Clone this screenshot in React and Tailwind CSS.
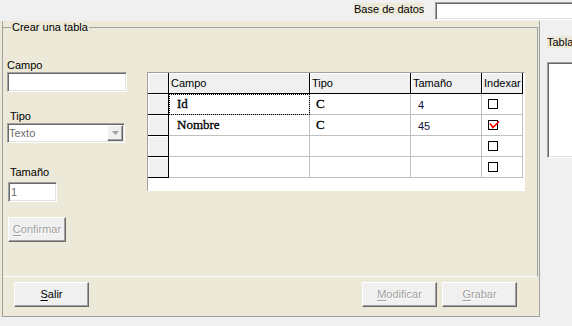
import React from "react";

// classic win32 edges
const sunken =
  "border border-t-[#a0a0a0] border-l-[#a0a0a0] border-b-white border-r-white shadow-[inset_1px_1px_0_#696969,inset_-1px_-1px_0_#e3e3e3]";
const raised =
  "border border-t-white border-l-white border-b-[#696969] border-r-[#696969] shadow-[inset_-1px_-1px_0_#a0a0a0]";

const columns = [
  { name: "Campo", cls: "w-[141px]" },
  { name: "Tipo", cls: "w-[101px]" },
  { name: "Tamaño", cls: "w-[71px]" },
  { name: "Indexar", cls: "w-[41px]" },
];

const rows = [
  { campo: "Id", tipo: "C", tam: "4", idx: false, focus: true },
  { campo: "Nombre", tipo: "C", tam: "45", idx: true },
  { campo: "", tipo: "", tam: "", idx: false },
  { campo: "", tipo: "", tam: "", idx: false },
];

const serif = "font-['Liberation_Serif','Times_New_Roman',serif] text-[13px] text-black [-webkit-text-stroke:0.3px_#000]";

const Button = ({ label, rest, disabled, className = "" }) => (
  <button
    disabled={disabled}
    className={`h-[25px] bg-[#f0f0f0] ${raised} leading-[13px] ${
      disabled ? "text-[#a0a0a0] [text-shadow:1px_1px_0_#ffffff]" : "text-black"
    } ${className}`}
  >
    <span className="underline underline-offset-2">{label}</span>
    {rest}
  </button>
);

const CheckBox = ({ checked }) => (
  <div className="w-[10px] h-[10px] border border-black bg-white relative overflow-visible">
    {checked && (
      <svg width="12" height="11" viewBox="0 0 12 11" className="absolute left-[0px] top-[-1px]">
        <path d="M1 3.5 L4 7.5 L10 1.5" fill="none" stroke="#ff0000" strokeWidth="1.6" />
      </svg>
    )}
  </div>
);

const Grid = () => (
  <div className="mt-[38px] ml-[20px] w-[378px] h-[119px] shrink-0 border border-t-[#a0a0a0] border-l-[#a0a0a0] border-b-white border-r-white bg-white">
    <div className="flex h-[21px]">
      <div className="w-[21px] h-full bg-[#f0f0f0] border-r border-b border-black shadow-[inset_1px_1px_0_#ffffff]" />
      {columns.map((c) => (
        <div
          key={c.name}
          className={`${c.cls} h-full bg-[#f0f0f0] border-r border-b border-black pl-[2px] leading-[20px] shadow-[inset_1px_1px_0_#ffffff] whitespace-nowrap overflow-hidden`}
        >
          {c.name}
        </div>
      ))}
    </div>
    {rows.map((r, i) => (
      <div key={i} className="flex h-[21px]">
        <div className="w-[21px] h-full bg-[#f0f0f0] border-r border-b border-black shadow-[inset_1px_1px_0_#ffffff]" />
        <div
          className={`w-[141px] h-full border-r border-b border-[#c0c0c0] pl-[8px] leading-[20px] ${serif} ${
            r.focus ? "outline-1 outline-dotted outline-black -outline-offset-1" : ""
          }`}
        >
          {r.campo}
        </div>
        <div className={`w-[101px] h-full border-r border-b border-[#c0c0c0] pl-[6px] leading-[20px] ${serif}`}>{r.tipo}</div>
        <div className="w-[71px] h-full border-r border-b border-[#c0c0c0] pl-[7px] pt-[1px] leading-[20px] text-[#101040]">{r.tam}</div>
        <div className="w-[41px] h-full border-r border-b border-[#c0c0c0] pl-[6px] flex items-center">
          <CheckBox checked={r.idx} />
        </div>
      </div>
    ))}
  </div>
);

export default function App() {
  return (
    <div className="w-[572px] h-[326px] bg-[#f0f0f0] overflow-hidden text-[11px] leading-[13px] text-black font-['Liberation_Sans',Arial,sans-serif]">
      {/* top bar */}
      <div className="h-[21px] flex items-start">
        <div className="w-[354px] shrink-0" />
        <div className="w-[81px] shrink-0 pt-[3px]">
          <span className="bg-[#ece9d8]">Base de datos</span>
        </div>
        <div className={`mt-[2px] w-[150px] h-[18px] shrink-0 bg-white ${sunken}`} />
      </div>

      <div className="flex items-start">
        {/* main panel */}
        <div className="w-[540px] h-[296px] shrink-0 bg-[#ece9d8] pl-[2px]">
          <div className="h-full border-l border-r border-b border-[#a0a0a0] flex flex-col">
            <fieldset className="w-[535px] h-[256px] shrink-0 border-t border-r border-b border-t-[#a0a0a0] border-r-[#a0a0a0] border-b-white">
              <legend className="ml-[8px] px-[1px] leading-[13px]">Crear una tabla</legend>
              <div className="flex items-start pl-[4px]">
                <div className="w-[120px] shrink-0 flex flex-col items-start">
                  <div className="mt-[25px] h-[13px]">Campo</div>
                  <div className={`w-[120px] h-[20px] bg-white ${sunken}`} />

                  <div className="mt-[18px] h-[13px] pl-[3px]">Tipo</div>
                  <div className={`w-[118px] h-[20px] bg-white ${sunken} flex items-center justify-between pl-[1px] pr-[1px]`}>
                    <span className="text-[#6d6d6d] leading-[16px]">Texto</span>
                    <div className={`w-[16px] h-[16px] bg-[#f0f0f0] ${raised} flex items-center justify-center`}>
                      <svg width="7" height="4" viewBox="0 0 7 4">
                        <path d="M0 0 L7 0 L3.5 4 Z" fill="#a0a0a0" />
                      </svg>
                    </div>
                  </div>

                  <div className="mt-[23px] h-[13px] pl-[3px]">Tamaño</div>
                  <div className={`mt-[3px] ml-[1px] w-[49px] h-[20px] bg-white ${sunken} pl-[2px] leading-[18px] text-[#6d6d6d]`}>1</div>

                  <Button label="C" rest="onfirmar" disabled className="mt-[15px] ml-[1px] w-[58px]" />
                </div>
                <Grid />
              </div>
            </fieldset>

            <div className="flex-1 flex items-start pt-[5px] pl-[11px] pr-[22px]">
              <Button label="S" rest="alir" className="w-[75px]" />
              <Button label="M" rest="odificar" disabled className="ml-auto w-[75px]" />
              <Button label="G" rest="rabar" disabled className="ml-[5px] w-[75px]" />
            </div>
          </div>
        </div>

        {/* right column */}
        <div className="pl-[7px] pt-[15px] shrink-0">
          <span className="bg-[#ece9d8]">Tabla</span>
          <div className={`mt-[13px] w-[60px] h-[96px] bg-white ${sunken}`} />
        </div>
      </div>
    </div>
  );
}
